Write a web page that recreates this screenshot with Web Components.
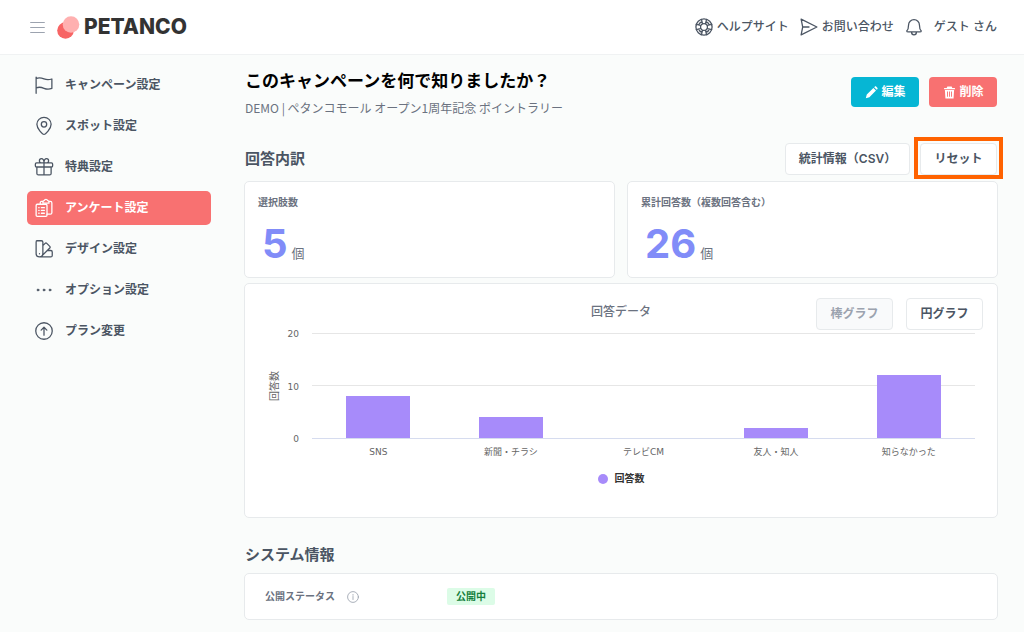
<!DOCTYPE html>
<html lang="ja">
<head>
<meta charset="utf-8">
<meta name="viewport" content="width=device-width, initial-scale=1">
<title>PETANCO アンケート設定</title>
<style>
  :root {
    --ink: #4b5563;
    --muted: #6b7280;
    --line: #e7eaec;
    --page: #fafcfb;
    --coral: #f87171;
    --cyan: #06b6d4;
    --indigo: #818cf8;
    --violet: #a78bfa;
  }
  body {
    margin: 0;
    background: var(--page);
    color: var(--ink);
    font: 12px/16px Inter, "Noto Sans CJK JP", sans-serif;
  }
</style>
</head>
<body>
<petanco-app></petanco-app>

<script>
const define = (name, html, setup) => {
  const template = document.createElement('template');
  template.innerHTML = html;
  customElements.define(name, class extends HTMLElement {
    constructor() {
      super();
      this.attachShadow({ mode: 'open' }).append(template.content.cloneNode(true));
    }
    connectedCallback() {
      if (setup && !this.ready) { this.ready = true; setup(this, this.shadowRoot); }
    }
  });
};

/* Line icons on a 24-unit grid */
const ICONS = {
  menu: '<path d="M1 4h22M1 12h22M1 20h22"/>',
  help: '<circle cx="12" cy="12" r="10.8"/><circle cx="12" cy="12" r="4.6"/><path d="M10 7.600L8.600 1.800M14 7.600l1.400-5.800M10 16.400l-1.400 5.800M14 16.400l1.400 5.800M7.600 10L1.800 8.600M7.600 14l-5.800 1.400M16.400 10l5.800-1.400M16.400 14l5.800 1.400M4.800 9.300Q6 6 9.200 4.800M14.800 4.800Q18 6 19.200 9.300M4.800 14.700Q6 18 9.200 19.200M14.800 19.200Q18 18 19.200 14.700"/>',
  send: '<path d="M3.600 12H12M3.600 12L1.500 1.500 22.500 12 1.500 22.500z"/>',
  bell: '<path d="M4.500 18.500c-1.300 0-2.200-.6-2.200-1.200C4.300 15.500 4.700 13 4.700 9.500a7.300 7.300 0 0 1 14.600 0c0 3.500.4 6 2.400 7.800 0 .6-.9 1.200-2.200 1.200zM8.700 18.500a3.300 3.900 0 0 0 6.600 0"/>',
  flag: '<path d="M1.500 23V1.500M1.500 3.500c4-2 6.500-1.300 10.500.4 4 1.600 6.500 1.500 10.500.1v12.500c-4 1.500-6.500 1.500-10.500-.1-4-1.700-6.500-2.300-10.500-.4"/>',
  pin: '<path d="M12 23.200c-1.700 0-9.500-7.500-9.500-13.400a9.500 9.300 0 0 1 19 0c0 5.900-7.800 13.400-9.500 13.400z"/><circle cx="12" cy="9.800" r="3.600"/>',
  gift: '<path d="M2.500 12v8.500c0 1.300.7 2 2 2h15c1.300 0 2-.7 2-2V12M2 6.500h20c1 0 1.500.5 1.500 1.500v2.500c0 1-.5 1.500-1.500 1.500H2c-1 0-1.500-.5-1.500-1.500V8c0-1 .5-1.500 1.500-1.500zM12 4v18.500M12 6.500H8.500C5 6.500 5 .8 8.500.8S12 4 12 6.500zM12 6.500h3.500c3.500 0 3.500-5.700 0-5.700S12 4 12 6.500z"/>',
  survey: '<rect x="1.500" y="7" width="14.500" height="16.300" rx="1.500"/><path d="M5 11.500h.5M8.500 11.500h4M5 15.200h.5M8.500 15.200h4M5 19h.5M8.500 19h4M7 7V5c0-1 .6-1.700 1.600-1.700h2M18.500 3.300h2c1.200 0 2 .8 2 2v13c0 1.200-.8 2-2 2H16M10.600 5.500V3.700c0-1 .5-1.500 1.400-1.500h.3a2.400 2.400 0 0 1 4.600 0h.3c.9 0 1.400.5 1.400 1.500v1.800z"/>',
  design: '<path d="M2.500 1h6C9.500 1 10.500 2 10.500 3v15a4.500 4.500 0 0 1-9 0V3c0-1 .3-2 1-2zM10.500 7.500l3-3c.7-.7 1.500-.7 2.200 0l4 4c.7.7.7 1.500 0 2.200L8.500 21.800M17.500 14H21c1.300 0 2 .7 2 2v4.500c0 1.300-.7 2-2 2H6M6 18.200v.2"/>',
  dots: '<g fill="currentColor" stroke-width="1"><circle cx="4" cy="12" r="1.300"/><circle cx="12" cy="12" r="1.300"/><circle cx="20" cy="12" r="1.300"/></g>',
  upgrade: '<circle cx="12" cy="12" r="11"/><path d="M12 17.500V7M8.200 10.800L12 7l3.800 3.800"/>',
  info: '<circle cx="12" cy="12" r="10.800"/><path d="M12 11v6M12 7v1.500"/>',
  pencil: '<path fill="currentColor" stroke="none" d="M1.500 22.500l1.800-6.600L15.500 3.700l4.800 4.800L8.100 20.700zM16.900 2.300l1-1c.9-.9 2.100-.9 3 0l1.800 1.800c.9.9.9 2.100 0 3l-1 1z"/>',
  trash: '<path fill="currentColor" stroke="none" fill-rule="evenodd" d="M8 1h8l1.200 2.500H22V6H2V3.500h4.800zM3.500 7.500h17L19.500 23h-15zM7.500 10v10h1.700V10zM11.200 10v10h1.700V10zM14.900 10v10h1.700V10z"/>'
};

define('ui-icon', `
  <style>
    :host { display: block; flex: none; width: 18px; height: 18px; }
    svg { display: block; width: 100%; height: 100%; overflow: visible; }
  </style>
  <svg viewBox="0 0 24 24" fill="none" stroke="currentColor" stroke-width="1.700" stroke-linecap="round" stroke-linejoin="round" aria-hidden="true"></svg>`,
  (host, root) => { root.querySelector('svg').innerHTML = ICONS[host.getAttribute('name')]; });

define('ui-button', `
  <style>
    :host { display: block; position: relative; }
    button {
      display: flex; align-items: center; justify-content: center; gap: 4px;
      width: 100%; height: 32px; padding: 0 14px; box-sizing: border-box;
      border: 1px solid var(--line); border-radius: 4px; background: #fff;
      color: var(--ink); font: 600 12px/16px Inter, "Noto Sans CJK JP", sans-serif;
      white-space: nowrap; cursor: pointer;
    }
    :host([tone]) button { border: 0; height: 30px; color: #fff; }
    :host([tone="edit"]) button { background: var(--cyan); }
    :host([tone="delete"]) button { background: var(--coral); }
    button:disabled { background: #f9fafb; color: #9ca3af; cursor: default; }
    :host([marked])::after {
      content: ""; position: absolute; z-index: 1; inset: -6px -6px -4px;
      border: 4px solid #ff6200; pointer-events: none;
    }
  </style>
  <button type="button"><slot></slot></button>`,
  (host, root) => { root.querySelector('button').disabled = host.hasAttribute('disabled'); });

define('app-header', `
  <style>
    :host { display: block; }
    header {
      display: flex; align-items: center; justify-content: space-between;
      height: 54px; padding: 0 27px 0 30px; background: #fff;
      border-bottom: 1px solid #f0f2f3;
    }
    .brand, nav { display: flex; align-items: center; }
    .menu { padding: 0; border: 0; background: none; color: #9ca3af; cursor: pointer; }
    .menu ui-icon { width: 15px; height: 15px; }
    .logo { display: flex; align-items: center; gap: 4px; margin-left: 12px; color: #333; text-decoration: none; font-size: 21px; line-height: 24px; font-weight: 800; }
    .logo svg { width: 23px; height: 23px; }
    nav a { display: flex; align-items: center; gap: 4px; color: var(--ink); text-decoration: none; font-weight: 500; }
    nav { gap: 11px; }
  </style>
  <header>
    <div class="brand">
      <button class="menu" type="button" aria-label="メニュー"><ui-icon name="menu"></ui-icon></button>
      <a class="logo" href="#">
        <svg viewBox="0 0 23 23" aria-hidden="true"><circle cx="8.500" cy="14.500" r="8.300" fill="#f76464"/><circle cx="14" cy="8.500" r="8.300" fill="#ffb0b0"/></svg>
        <span>PETANCO</span>
      </a>
    </div>
    <nav>
      <a href="#"><ui-icon name="help"></ui-icon>ヘルプサイト</a>
      <a href="#"><ui-icon name="send"></ui-icon>お問い合わせ</a>
      <a href="#" aria-label="お知らせ"><ui-icon name="bell"></ui-icon></a>
      <a href="#">ゲスト さん</a>
    </nav>
  </header>`);

define('nav-item', `
  <style>
    :host { display: block; }
    a {
      display: flex; align-items: center; gap: 12px; height: 34px; padding: 0 8px;
      border-radius: 5px; color: var(--ink); font-weight: 600; text-decoration: none;
    }
    :host([active]) a { background: var(--coral); color: #fff; }
  </style>
  <a href="#"><ui-icon></ui-icon><slot></slot></a>`,
  (host, root) => {
    const icon = document.createElement('ui-icon');
    icon.setAttribute('name', host.getAttribute('icon'));
    root.querySelector('ui-icon').replaceWith(icon);
    if (host.hasAttribute('active')) root.querySelector('a').setAttribute('aria-current', 'page');
  });

define('side-nav', `
  <style>
    :host { display: block; }
    nav { display: flex; flex-direction: column; gap: 7px; }
  </style>
  <nav><slot></slot></nav>`);

define('ui-card', `
  <style>
    :host { display: block; box-sizing: border-box; background: #fff; border: 1px solid var(--line); border-radius: 5px; }
  </style>
  <slot></slot>`);

define('stat-card', `
  <style>
    :host { display: block; }
    .body { padding: 12px 13px 9px; }
    h3 { margin: 0; color: var(--muted); font-size: 10px; line-height: 16px; font-weight: 600; }
    p { display: flex; align-items: baseline; gap: 4px; margin: 10px 4px 0; font-size: 13px; line-height: 16px; color: var(--muted); }
    strong { color: var(--indigo); font-size: 40px; line-height: 48px; font-weight: 700; }
  </style>
  <ui-card><div class="body"><h3><slot name="label"></slot></h3><p><strong><slot></slot></strong>個</p></div></ui-card>`);

define('bar-chart', `
  <style>
    :host { display: block; }
    figure { margin: 0; padding: 14px 14px 30px; color: #666; font: 9px/12px "DejaVu Sans", "Noto Sans CJK JP", sans-serif; }
    .top { display: grid; grid-template-columns: 1fr auto 1fr; height: 35px; }
    h3 { grid-column: 2; margin: 0; padding-top: 6px; color: var(--muted); font: 500 12px/16px Inter, "Noto Sans CJK JP", sans-serif; }
    .modes { display: flex; justify-content: flex-end; gap: 13px; }
    .modes ui-button { width: 77px; }
    .plot { display: grid; grid-template-columns: 28px 12px 1fr; padding-right: 8px; }
    .unit { display: flex; align-items: center; justify-content: center; padding-left: 4px; font-size: 10px; }
    .unit span { writing-mode: vertical-rl; text-orientation: sideways; transform: rotate(180deg); }
    .scale { display: flex; flex-direction: column; justify-content: space-between; align-items: flex-end; margin: -5px 0 -6px; }
    .area {
      display: grid; grid-auto-flow: column; grid-auto-columns: 1fr; align-items: end; justify-items: center;
      height: 105px; margin-left: 13px; border-bottom: 1px solid #d6dcef;
      background: linear-gradient(#e6e6e6 0 0) 0 0 / 100% 1px no-repeat, linear-gradient(#e6e6e6 0 0) 0 50% / 100% 1px no-repeat;
    }
    .bar { width: 48%; background: var(--violet); }
    .names { grid-column: 3; display: grid; grid-auto-flow: column; grid-auto-columns: 1fr; margin: 7px 0 0 13px; text-align: center; white-space: nowrap; }
    figcaption { display: flex; align-items: center; justify-content: center; gap: 7px; margin-top: 13px; color: #333; font-size: 10px; line-height: 16px; font-weight: 700; }
    figcaption::before { content: ""; width: 10px; height: 10px; border-radius: 50%; background: var(--violet); }
  </style>
  <ui-card>
    <figure>
      <div class="top">
        <h3>回答データ</h3>
        <div class="modes"><ui-button disabled>棒グラフ</ui-button><ui-button>円グラフ</ui-button></div>
      </div>
      <div class="plot">
        <div class="unit"><span>回答数</span></div>
        <div class="scale"><span>20</span><span>10</span><span>0</span></div>
        <div class="area"></div>
        <div class="names"></div>
      </div>
      <figcaption>回答数</figcaption>
    </figure>
  </ui-card>`,
  (host, root) => {
    const answers = [['SNS', 8], ['新聞・チラシ', 4], ['テレビCM', 0], ['友人・知人', 2], ['知らなかった', 12]];
    for (const [name, count] of answers) {
      const bar = document.createElement('div');
      bar.className = 'bar';
      bar.style.height = count / 20 * 100 + '%';
      root.querySelector('.area').append(bar);
      const label = document.createElement('span');
      label.textContent = name;
      root.querySelector('.names').append(label);
    }
  });

define('status-row', `
  <style>
    :host { display: block; }
    dl { display: grid; grid-template-columns: 182px 1fr; align-items: center; margin: 0; padding: 14px 20px; font-size: 10px; line-height: 17px; font-weight: 600; }
    dt { display: flex; align-items: center; gap: 12px; color: var(--muted); }
    dt ui-icon { width: 12px; height: 12px; color: #9ca3af; }
    dd { margin: 0; }
    .badge { display: inline-block; padding: 0 9px; border-radius: 2px; background: #dcfce7; color: #15803d; }
  </style>
  <ui-card><dl>
    <dt><slot name="label"></slot><ui-icon name="info"></ui-icon></dt>
    <dd><span class="badge"><slot></slot></span></dd>
  </dl></ui-card>`);

define('petanco-app', `
  <style>
    :host { display: block; }
    .layout { display: grid; grid-template-columns: 184px minmax(0, 1fr); column-gap: 33px; padding: 13px 26px 12px 27px; }
    .head, .section { display: flex; align-items: center; justify-content: space-between; padding-left: 1px; }
    h1 { margin: 0; color: #000; font-size: 17px; line-height: 26px; font-weight: 700; }
    .head p { margin: 6px 0 0; color: var(--muted); font-family: "Noto Sans CJK JP", sans-serif; line-height: 16px; }
    .actions { display: flex; gap: 10px; padding-right: 1px; }
    .head ui-button { width: 68px; }
    .head ui-icon { width: 13px; height: 13px; }
    .section { margin-top: 27px; }
    .section ui-button:first-child { width: 125px; }
    .section ui-button:last-child { width: 77px; }
    h2 { margin: 0; font-size: 15px; line-height: 20px; font-weight: 700; }
    .stats { display: grid; grid-template-columns: 1fr 1fr; gap: 12px; margin: 6px 0 5px; }
    .system { margin: 27px 0 8px; padding-left: 1px; }
  </style>
  <app-header></app-header>
  <div class="layout">
    <side-nav>
      <nav-item icon="flag">キャンペーン設定</nav-item>
      <nav-item icon="pin">スポット設定</nav-item>
      <nav-item icon="gift">特典設定</nav-item>
      <nav-item icon="survey" active>アンケート設定</nav-item>
      <nav-item icon="design">デザイン設定</nav-item>
      <nav-item icon="dots">オプション設定</nav-item>
      <nav-item icon="upgrade">プラン変更</nav-item>
    </side-nav>
    <main>
      <div class="head">
        <div>
          <h1>このキャンペーンを何で知りましたか？</h1>
          <p>DEMO | ペタンコモール オープン1周年記念 ポイントラリー</p>
        </div>
        <div class="actions">
          <ui-button tone="edit"><ui-icon name="pencil"></ui-icon>編集</ui-button>
          <ui-button tone="delete"><ui-icon name="trash"></ui-icon>削除</ui-button>
        </div>
      </div>
      <div class="section">
        <h2>回答内訳</h2>
        <div class="actions">
          <ui-button>統計情報（CSV）</ui-button>
          <ui-button marked>リセット</ui-button>
        </div>
      </div>
      <div class="stats">
        <stat-card><span slot="label">選択肢数</span>5</stat-card>
        <stat-card><span slot="label">累計回答数（複数回答含む）</span>26</stat-card>
      </div>
      <bar-chart></bar-chart>
      <h2 class="system">システム情報</h2>
      <status-row><span slot="label">公開ステータス</span>公開中</status-row>
    </main>
  </div>`);
</script>
</body>
</html>
